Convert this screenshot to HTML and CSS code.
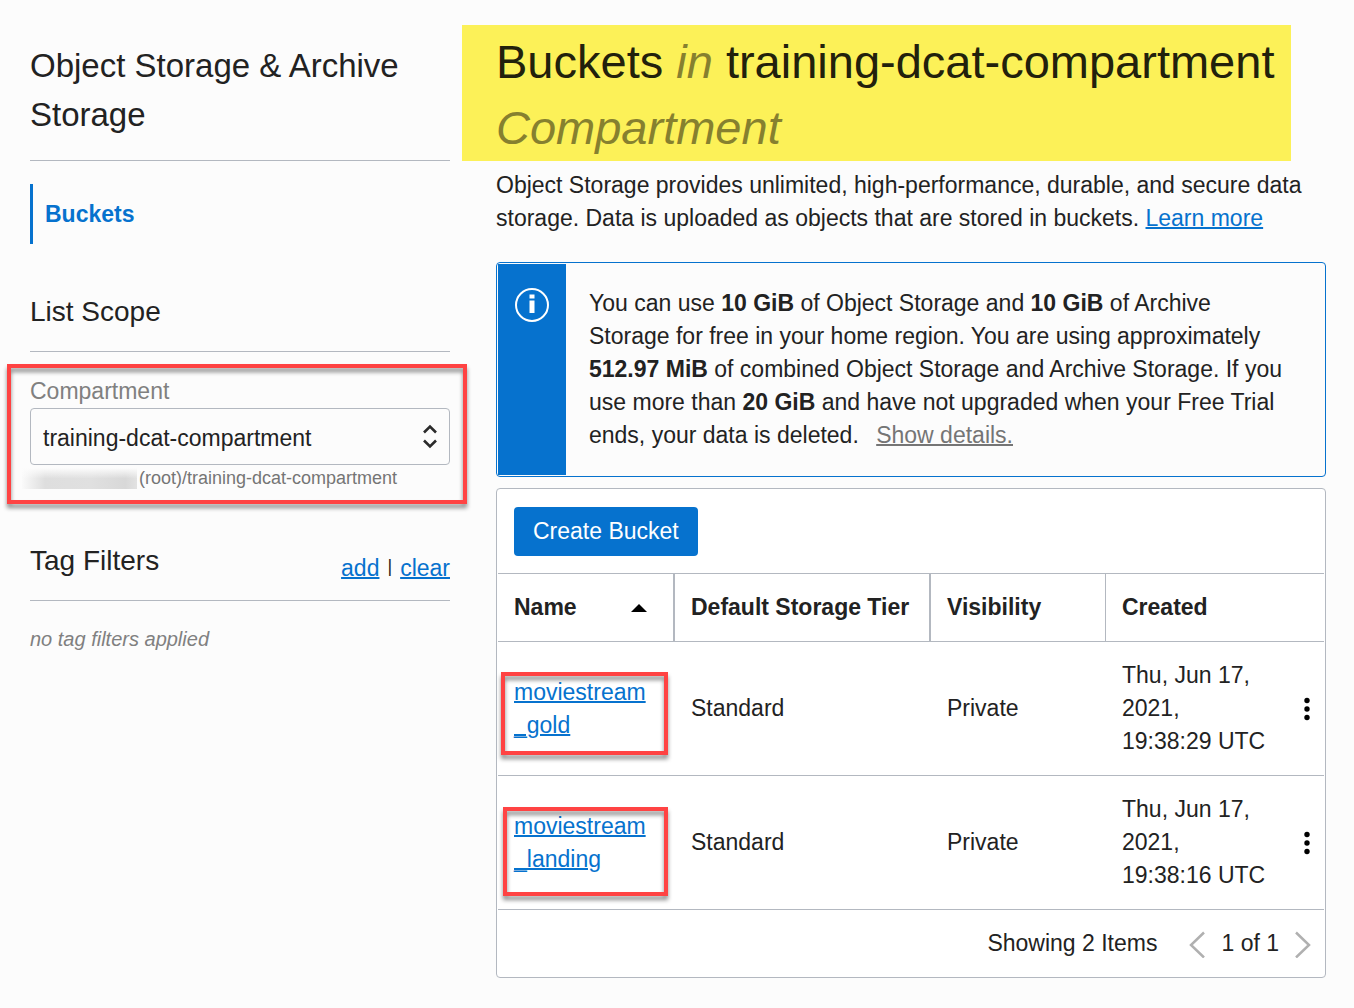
FILE: index.html
```html
<!DOCTYPE html>
<html lang="en">
<head>
<meta charset="utf-8">
<meta name="viewport" content="width=device-width, initial-scale=1">
<title>Buckets - Object Storage</title>
<link rel="stylesheet" href="styles.css">
</head>
<body>
<div class="page">
  <aside class="sidebar">
    <h2 class="service-title">Object Storage &amp; Archive Storage</h2>
    <nav class="service-nav">
      <a class="nav-link" href="#" aria-current="page">Buckets</a>
    </nav>

    <div class="section-head"><h3 class="section-title">List Scope</h3></div>
    <div class="field annotated">
      <label class="field-label" for="compartment">Compartment</label>
      <div class="select-wrap">
        <select class="select" id="compartment">
          <option>training-dcat-compartment</option>
        </select>
        <svg class="select-icon" width="16" height="26" viewBox="0 0 16 26" aria-hidden="true">
          <path d="M2 8.500 8 2.500l6 6M2 16.500l6 6 6-6" fill="none" stroke="#2b2b2b" stroke-width="2.600"/>
        </svg>
      </div>
      <div class="path"><span class="redacted"></span><span>(root)/training-dcat-compartment</span></div>
      <span class="frame frame-field"></span>
    </div>

    <div class="section-head section-head-links">
      <h3 class="section-title">Tag Filters</h3>
      <div class="section-links"><a href="#">add</a><span class="separator">|</span><a href="#">clear</a></div>
    </div>
    <p class="empty">no tag filters applied</p>
  </aside>

  <main class="content">
    <h1 class="title">Buckets <em>in</em> training-dcat-compartment <em>Compartment</em></h1>
    <p class="intro">Object Storage provides unlimited, high-performance, durable, and secure data storage. Data is uploaded as objects that are stored in buckets. <a href="#">Learn more</a></p>

    <section class="notice">
      <div class="notice-strip">
        <svg width="34" height="34" viewBox="0 0 34 34" aria-hidden="true">
          <circle cx="17" cy="17" r="16" fill="none" stroke="#fff" stroke-width="2"/>
          <path d="M14.500 6.500h5v4h-5zM14.500 12.500h5v12.500h-5z" fill="#fff"/>
        </svg>
      </div>
      <p class="notice-text">You can use <b>10 GiB</b> of Object Storage and <b>10 GiB</b> of Archive Storage for free in your home region. You are using approximately <b>512.97 MiB</b> of combined Object Storage and Archive Storage. If you use more than <b>20 GiB</b> and have not upgraded when your Free Trial ends, your data is deleted. <a class="details" href="#">Show details.</a></p>
    </section>

    <section class="card">
      <div class="toolbar"><button class="primary" type="button">Create Bucket</button></div>
      <table class="buckets">
        <colgroup><col class="col-name"><col class="col-tier"><col class="col-visibility"><col><col class="col-menu"></colgroup>
        <thead>
          <tr>
            <th class="divided" scope="col" aria-sort="ascending"><button class="sort" type="button">Name
              <svg width="16" height="8" viewBox="0 0 16 8" aria-hidden="true"><path d="M0 8 8 0l8 8z"/></svg></button></th>
            <th class="divided" scope="col">Default Storage Tier</th>
            <th class="divided-thin" scope="col">Visibility</th>
            <th scope="col">Created</th>
            <td></td>
          </tr>
        </thead>
        <tbody>
          <tr>
            <td class="annotated"><a href="#">moviestream<wbr>_gold</a><span class="frame frame-gold"></span></td>
            <td>Standard</td>
            <td>Private</td>
            <td>Thu, Jun 17, 2021, 19:38:29 UTC</td>
            <td class="menu-cell"><button class="menu" type="button" aria-label="Actions"><svg width="6" height="24" viewBox="0 0 6 24" aria-hidden="true"><circle cx="3" cy="3.500" r="2.700"/><circle cx="3" cy="12" r="2.700"/><circle cx="3" cy="20.500" r="2.700"/></svg></button></td>
          </tr>
          <tr>
            <td class="annotated"><a href="#">moviestream<wbr>_landing</a><span class="frame frame-landing"></span></td>
            <td>Standard</td>
            <td>Private</td>
            <td>Thu, Jun 17, 2021, 19:38:16 UTC</td>
            <td class="menu-cell"><button class="menu" type="button" aria-label="Actions"><svg width="6" height="24" viewBox="0 0 6 24" aria-hidden="true"><circle cx="3" cy="3.500" r="2.700"/><circle cx="3" cy="12" r="2.700"/><circle cx="3" cy="20.500" r="2.700"/></svg></button></td>
          </tr>
        </tbody>
      </table>
      <div class="pager">
        <span class="count">Showing 2 Items</span>
        <button class="page-button" type="button" aria-label="Previous page"><svg width="16" height="28" viewBox="0 0 16 28" aria-hidden="true"><path d="M15 2.500 2 15l13 12.500" fill="none" stroke="#b0b0b0" stroke-width="2.500"/></svg></button>
        <span>1 of 1</span>
        <button class="page-button" type="button" aria-label="Next page"><svg width="16" height="28" viewBox="0 0 16 28" aria-hidden="true"><path d="M1 2.500 14 15 1 27.500" fill="none" stroke="#b0b0b0" stroke-width="2.500"/></svg></button>
      </div>
    </section>
  </main>
</div>
</body>
</html>
```
FILE: styles.css
```css
* {
  box-sizing: border-box;
}

body {
  margin: 0;
  background: #fcfcfc;
  color: #222;
  font-family: "Liberation Sans", Arial, sans-serif;
  font-size: 23px;
  line-height: 33px;
}

h1, h2, h3, p {
  margin: 0;
  font-weight: 400;
}

a {
  color: #0672ce;
  text-decoration-thickness: 2px;
}

button, select {
  font: inherit;
  color: inherit;
}

button {
  border: 0;
  padding: 0;
  background: none;
  cursor: pointer;
}

svg {
  display: block;
}

.page {
  display: flex;
  align-items: flex-start;
  gap: 46px;
  padding: 25px 28px 30px 30px;
}

/* Sidebar */
.sidebar {
  flex: 0 0 420px;
  padding-top: 16px;
}

.service-title {
  padding-bottom: 21px;
  border-bottom: 1px solid #b3b8c0;
  font-size: 33px;
  line-height: 49px;
}

.service-nav {
  margin: 23px 0 47px;
}

.nav-link {
  display: flex;
  align-items: center;
  height: 60px;
  padding-left: 12px;
  border-left: 3px solid #0672ce;
  font-weight: 700;
  text-decoration: none;
}

.section-head {
  display: flex;
  justify-content: space-between;
  margin-bottom: 23px;
  padding-bottom: 18px;
  border-bottom: 1px solid #b3b8c0;
}

.section-head-links {
  padding-bottom: 15px;
}

.section-title {
  font-size: 28px;
  line-height: 42px;
}

.section-links {
  display: flex;
  align-items: flex-start;
  gap: 8px;
  padding-top: 12px;
}

.separator {
  font-size: 18px;
  line-height: 28px;
}

.field {
  margin-bottom: 48px;
}

.field-label {
  display: block;
  color: #808080;
}

.select-wrap {
  display: grid;
  align-items: center;
}

.select, .select-icon {
  grid-area: 1 / 1;
}

.select {
  width: 100%;
  height: 57px;
  padding: 3px 40px 0 12px;
  border: 1px solid #b3b8c0;
  border-radius: 4px;
  background: #fcfcfc;
  appearance: none;
}

.select-icon {
  justify-self: end;
  margin-right: 12px;
  pointer-events: none;
}

.path {
  display: flex;
  align-items: center;
  color: #757575;
  font-size: 18px;
  line-height: 27px;
}

.redacted {
  width: 115px;
  height: 21px;
  margin: 0 2px 0 -8px;
  background:
    linear-gradient(#fcfcfc, transparent 50%),
    linear-gradient(90deg, #fafafa, #dedede 20%, #e0e0e0 60%, #d8d8d8 90%, #e2e2e2);
}

.empty {
  color: #808080;
  font-size: 20px;
  font-style: italic;
  line-height: 30px;
}

/* Red call-out frames */
.annotated {
  position: relative;
}

.frame {
  position: absolute;
  border: 4px solid #ff4343;
  filter: drop-shadow(0 4px 2px rgba(0, 0, 0, 0.45));
  pointer-events: none;
}

.frame-field {
  inset: -11px -17px -12px -23px;
}

.frame-gold {
  inset: 30px 7px 20px 3px;
}

.frame-landing {
  inset: 31px 7px 13px 5px;
}

/* Main column */
.content {
  flex: 1;
  min-width: 0;
}

.title {
  margin: 0 35px 8px -34px;
  padding: 4px 0 0 34px;
  background: #fcf158;
  color: #22210c;
  font-size: 47px;
  line-height: 66px;
}

.title em {
  color: #86802f;
}

.notice {
  display: flex;
  margin: 27px 0 11px;
  border: 1px solid #0672ce;
  border-radius: 4px;
}

.notice-strip {
  flex: 0 0 68px;
  display: flex;
  justify-content: center;
  margin: 1px;
  padding-top: 24px;
  background: #0672ce;
}

.notice-text {
  padding: 24px 32px 24px 22px;
}

.details {
  margin-left: 11px;
  color: #757575;
}

.card {
  padding: 0 1px;
  border: 1px solid #b3b8c0;
  border-radius: 4px;
  background: #fff;
}

.toolbar {
  padding: 18px 16px 17px;
}

.primary {
  display: block;
  height: 49px;
  padding: 0 19px;
  border-radius: 4px;
  background: #0672ce;
  color: #fff;
}

.buckets {
  width: 100%;
  border-top: 1px solid #b3b8c0;
  border-spacing: 0;
  table-layout: fixed;
}

.buckets th, .buckets td {
  padding: 17px 16px;
  border-bottom: 1px solid #b3b8c0;
  text-align: left;
}

.buckets .divided {
  border-right: 2px solid #b3b8c0;
}

.buckets .divided-thin {
  border-right: 1px solid #b3b8c0;
}

.col-name { width: 177px; }
.col-tier { width: 256px; }
.col-visibility { width: 175px; }
.col-menu { width: 36px; }

.sort {
  display: flex;
  align-items: center;
  justify-content: space-between;
  width: 100%;
  padding-right: 10px;
  font-weight: 700;
}

.buckets .menu-cell {
  padding: 0 14px 0 16px;
}

.menu {
  display: block;
}

.pager {
  display: flex;
  align-items: center;
  justify-content: flex-end;
  gap: 16px;
  padding: 17px 13px;
}

.count {
  margin-right: 16px;
}
```
